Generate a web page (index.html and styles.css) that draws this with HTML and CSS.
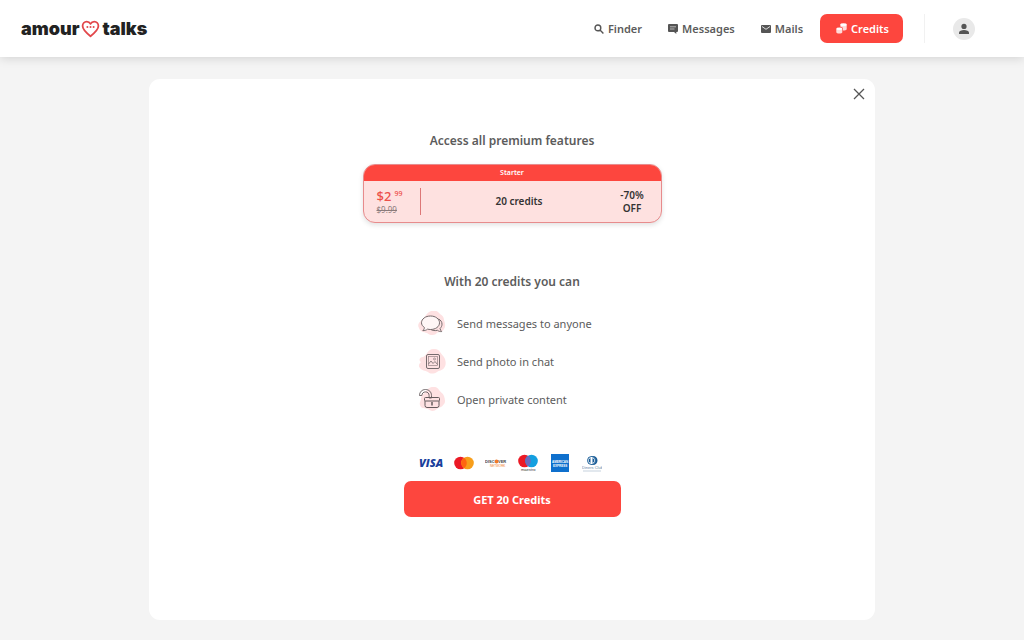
FILE: index.html
```html
<!DOCTYPE html>
<html lang="en">
<head>
  <meta charset="UTF-8">
  <meta name="viewport" content="width=device-width, initial-scale=1.0">
  <title>AmourTalks - Credits</title>
  <link rel="stylesheet" href="styles.css">
</head>
<body>
  <header class="header">
    <a class="logo" href="#">
      <span>amour</span>
      <svg width="19" height="18" viewBox="0 0 19 18" fill="none">
        <path d="M9.5 16.3C4.5 12.3 1.6 9.5 1.6 6.1 1.6 3.4 3.5 1.6 5.7 1.6c1.6 0 3 .8 3.8 2.3.8-1.5 2.2-2.3 3.8-2.3 2.2 0 4.1 1.8 4.1 4.5 0 3.4-2.9 6.2-7.9 10.2z" stroke="#e2474b" stroke-width="1.8" stroke-linejoin="round"/>
        <circle cx="6.4" cy="7" r="1" fill="#e2474b"/>
        <circle cx="9.5" cy="7" r="1" fill="#e2474b"/>
        <circle cx="12.6" cy="7" r="1" fill="#e2474b"/>
      </svg>
      <span>talks</span>
    </a>
    <nav class="nav">
      <a class="nav-link" href="#">
        <svg width="10" height="10" viewBox="0 0 10 10" fill="none" stroke="#555" stroke-width="1.4">
          <circle cx="3.9" cy="3.9" r="2.9"/>
          <path d="M6 6l3.4 3.4"/>
        </svg>
        Finder
      </a>
      <a class="nav-link" href="#">
        <svg width="10" height="10" viewBox="0 0 10 10">
          <path d="M1 0h8q1 0 1 1v6q0 1-1 1H8.3v2L6 8H1Q0 8 0 7V1q0-1 1-1z" fill="#555"/>
          <path d="M2 2.8h6M2 5h4.5" stroke="#fff" stroke-width=".6"/>
        </svg>
        Messages
      </a>
      <a class="nav-link" href="#">
        <svg width="10" height="10" viewBox="0 0 10 10">
          <rect y="1" width="10" height="8" rx="1" fill="#555"/>
          <path d="M1 2.5l4 2.8 4-2.8" fill="none" stroke="#fff" stroke-width=".8"/>
        </svg>
        Mails
      </a>
      <a class="nav-link nav-credits" href="#">
        <svg width="11" height="11" viewBox="0 0 11 11" fill="#fff">
          <path d="M4.400 1.600v2.200c1.400.1 2.500.7 2.500 1.600v2.200c2 0 3.800-.5 3.800-1.300V1.600z" opacity=".8"/>
          <ellipse cx="7.5" cy="1.7" rx="3.2" ry="1.4"/>
          <path d="M.3 5.800v3.400c0 .9 1.400 1.400 3 1.400s3-.5 3-1.400V5.800z" opacity=".8"/>
          <ellipse cx="3.3" cy="5.8" rx="3" ry="1.3"/>
        </svg>
        Credits
      </a>
    </nav>
    <button class="avatar" aria-label="Profile">
      <svg width="12" height="12" viewBox="0 0 12 12" fill="#555">
        <circle cx="6" cy="3.4" r="2.6"/>
        <path d="M1 11V9.6C1 7.9 3.5 7 6 7s5 .9 5 2.6V11z"/>
      </svg>
    </button>
  </header>

  <main class="panel">
    <button class="close" aria-label="Close">
      <svg width="12" height="12" viewBox="0 0 12 12" stroke="#555" stroke-width="1.3">
        <path d="M1 1l10 10M11 1L1 11"/>
      </svg>
    </button>

    <h1 class="title">Access all premium features</h1>

    <section class="plan">
      <div class="plan-name">Starter</div>
      <div class="plan-body">
        <div class="plan-price">
          <div class="price">$2<sup>99</sup></div>
          <del class="old-price">$9.99</del>
        </div>
        <div class="plan-credits">20 credits</div>
        <div class="plan-discount">-70%<br>OFF</div>
      </div>
    </section>

    <h2 class="title subtitle">With 20 credits you can</h2>

    <ul class="features">
      <li>
        <svg width="28" height="26" viewBox="0 0 28 26" fill="none" stroke="#756b6d" stroke-width="1">
          <path d="M11 1c3-2 8-2 10 1 2 2 5 3 5 7 1 3 2 6 0 9-2 4-6 2-8 5-3 2-7 1-9-1-3-1-7-1-8-5-2-3 0-6 3-8 3-3 4-6 7-8z" fill="#fee1e2" stroke="none"/>
          <path d="M20.500 8c2.300 1 3.500 3 3.500 5.200 0 1.700-.7 3.100-1.900 4.200.1 1.300.7 2.300 1.600 3.200-1.800.1-3.100-.4-4.200-1.300-3 .8-6.100.1-7.900-1.800"/>
          <path d="M12.500 5c5 0 9 2.900 9 6.800s-4 6.700-9 6.700c-1 0-2-.1-2.900-.4-1.300 1.100-2.800 1.600-4.800 1.500 1.100-.9 1.500-1.900 1.600-3.100-1.800-1.200-2.900-2.900-2.900-4.700C3.500 7.900 7.500 5 12.500 5z" fill="#fff6f6"/>
        </svg>
        Send messages to anyone
      </li>
      <li>
        <svg width="28" height="26" viewBox="0 0 28 26" fill="none" stroke="#756b6d" stroke-width="1">
          <path d="M12 1c3-2 9-1 10 2 1 2 4 4 5 7s1 7-1 9c-2 3-5 2-7 4-3 2-7 2-9 0-3-2-6-1-8-4-2-2-1-4 1-6-3-2-1-5 2-5 3-1 4-5 7-7z" fill="#fee1e2" stroke="none"/>
          <rect x="8.500" y="5.500" width="13" height="14" rx="1.500"/>
          <rect x="10.500" y="7.500" width="9" height="9" stroke="#958487" stroke-width=".7"/>
          <path d="M10.500 15l2.500-3 2 2.500 2-2 2.500 3" stroke-width=".8"/>
          <circle cx="16.500" cy="10" r="1" stroke-width=".6"/>
        </svg>
        Send photo in chat
      </li>
      <li>
        <svg width="28" height="26" viewBox="0 0 28 26" fill="none" stroke="#655b5d" stroke-width="1">
          <path d="M10 2c3-3 9-3 11 1 1 2 4 3 5 6s2 7-1 9c-1 3-5 2-6 4-3 3-7 2-9 0-3-1-7 0-8-4-1-2 1-4 1-7 1-4 5-6 7-9z" fill="#fee1e2" stroke="none"/>
          <path d="M1.500 8.500C1.500 5 4 2.500 7.500 2.500s6 2.500 6 6V11h-2.400V8.500c0-2.200-1.500-3.600-3.600-3.600S3.900 6.300 3.900 8.500z" stroke-width=".9"/>
          <rect x="6.500" y="10.500" width="15" height="3.500" rx="1"/>
          <path d="M7 14v4.500q0 2 2 2h10q2 0 2-2V14"/>
          <path d="M14 15v3.500" stroke-width="1.500"/>
        </svg>
        Open private content
      </li>
    </ul>

    <div class="cards">
      <svg width="26" height="18" viewBox="0 0 26 18">
        <text x="0" y="13" class="visa">VISA</text>
      </svg>
      <svg width="20" height="18" viewBox="0 0 20 18">
        <circle cx="6.500" cy="9" r="6.300" fill="#eb1925"/>
        <circle cx="13.500" cy="9" r="6.300" fill="#f79e1b"/>
        <path d="M10 3.800a6.300 6.300 0 0 1 0 10.400 6.300 6.300 0 0 1 0-10.400z" fill="#ff6510"/>
      </svg>
      <svg width="22" height="18" viewBox="0 0 22 18">
        <text x="0" y="9" class="discover">DISC</text>
        <circle cx="11.500" cy="7.500" r="1.900" fill="#f17a28"/>
        <text x="13" y="9" class="discover">VER</text>
        <text x="5" y="13" class="network">NETWORK</text>
      </svg>
      <svg width="20" height="18" viewBox="0 0 20 18">
        <circle cx="6.500" cy="7" r="6.300" fill="#eb1925"/>
        <circle cx="13.500" cy="7" r="6.300" fill="#139fe0"/>
        <path d="M10 1.800a6.300 6.300 0 0 1 0 10.400 6.300 6.300 0 0 1 0-10.400z" fill="#6c6bbd"/>
        <text x="3" y="17" class="maestro">maestro</text>
      </svg>
      <svg width="18" height="18" viewBox="0 0 18 18">
        <rect width="18" height="18" fill="#0f70cd"/>
        <text x="1" y="9" class="amex">AMERICAN</text>
        <text x="2" y="13" class="amex">EXPRESS</text>
      </svg>
      <svg width="20" height="18" viewBox="0 0 20 18">
        <path d="M9 2h2a4.500 4.500 0 0 1 0 9H9z" fill="#185c97"/>
        <circle cx="9.500" cy="6.500" r="4" fill="#fff" stroke="#185c97"/>
        <path d="M8.500 4v5a2.600 2.600 0 0 1 0-5zm2 0v5a2.600 2.600 0 0 0 0-5z" fill="#185c97"/>
        <text x="0" y="15" class="diners">Diners Club</text>
        <path d="M1 17h18" stroke="#9fb4c8" stroke-width=".6"/>
      </svg>
    </div>

    <button class="buy">GET 20 Credits</button>
  </main>
</body>
</html>
```

FILE: styles.css
```css
* {
  box-sizing: border-box;
}
body {
  margin: 0;
  min-height: 100vh;
  background: #f4f4f4;
  color: #5c5c5c;
  font-family: "Noto Sans", "Open Sans", sans-serif;
  font-size: 11px;
}
a {
  color: inherit;
  text-decoration: none;
}
button {
  padding: 0;
  border: none;
  font-family: inherit;
  cursor: pointer;
}
svg {
  display: block;
  flex-shrink: 0;
}
.header {
  display: flex;
  align-items: center;
  height: 57px;
  padding: 0 49px 0 21px;
  background: #fff;
  box-shadow: 0 1px 10px rgba(0, 0, 0, 0.15);
}
.logo {
  display: flex;
  align-items: center;
  gap: 2px;
  margin-right: auto;
  color: #222;
  font-family: Inter, sans-serif;
  font-size: 18px;
  font-weight: 900;
}
.nav {
  display: flex;
  align-items: center;
  gap: 26px;
  padding-right: 21px;
  border-right: 1px solid #f1f1f1;
}
.nav-link {
  display: flex;
  align-items: center;
  gap: 4px;
  height: 29px;
  font-size: 11px;
  font-weight: 600;
}
.nav-credits {
  margin-left: -9px;
  padding: 0 14px 0 16px;
  border-radius: 7px;
  background: #fd463e;
  color: #fff;
}
.avatar {
  display: flex;
  align-items: center;
  justify-content: center;
  width: 22px;
  height: 22px;
  margin-left: 28px;
  border-radius: 50%;
  background: #e9e9e9;
}
.panel {
  display: flex;
  flex-direction: column;
  align-items: center;
  width: 90%;
  max-width: 726px;
  min-height: calc(100vh - 99px);
  margin: 22px auto 20px;
  padding: 8px 9px;
  border-radius: 11px;
  background: #fff;
}
.close {
  align-self: flex-end;
  padding: 1px;
  background: none;
}
.title {
  margin: 31px 0 14px;
  font-size: 12px;
  font-weight: 600;
  line-height: 18px;
}
.plan {
  width: 100%;
  max-width: 299px;
  overflow: hidden;
  border: 1px solid #e78b8c;
  border-radius: 12px;
  background: #fee1e0;
  box-shadow: 0 2px 5px rgba(0, 0, 0, 0.12);
}
.plan-name {
  background: #fd463e;
  color: #fff;
  font-size: 7px;
  font-weight: 600;
  line-height: 16px;
  text-align: center;
}
.plan-body {
  display: grid;
  grid-template-columns: 57px 1fr 57px;
  align-items: center;
  height: 41px;
  color: #333;
  font-weight: 600;
  text-align: center;
}
.plan-price {
  padding-left: 13px;
  border-right: 1px solid #dd7777;
  text-align: left;
}
.price {
  color: #ec4f4a;
  font-size: 13px;
  font-weight: 500;
  line-height: 16px;
}
.price sup {
  margin-left: 3px;
  font-size: 7px;
  line-height: 1;
}
.old-price {
  display: block;
  color: #8b7b7b;
  font-size: 8px;
  font-weight: 400;
  line-height: 11px;
}
.plan-credits,
.plan-discount {
  font-size: 10px;
  line-height: 13px;
}
.plan-credits {
  padding-left: 14px;
}
.subtitle {
  margin-top: 50px;
}
.features {
  display: flex;
  flex-direction: column;
  gap: 12px;
  width: 188px;
  margin: 6px 0 41px;
  padding: 0;
  list-style: none;
}
.features li {
  display: flex;
  align-items: center;
  gap: 11px;
  line-height: 26px;
  white-space: nowrap;
}
.cards {
  display: grid;
  grid-template-columns: repeat(6, 32px);
  align-items: center;
  justify-items: center;
}
.cards text {
  font-family: "Liberation Sans", Arial, sans-serif;
}
.cards .visa {
  fill: #1a3f9c;
  font-family: "Open Sans", sans-serif;
  font-size: 11px;
  font-style: italic;
  font-weight: 800;
}
.cards .discover {
  fill: #444;
  font-size: 4px;
  font-weight: 700;
}
.cards .network {
  fill: #f17a28;
  font-size: 3px;
}
.cards .maestro {
  fill: #333;
  font-size: 4px;
}
.cards .amex {
  fill: #fff;
  font-size: 3px;
  font-weight: 700;
}
.cards .diners {
  fill: #6686a5;
  font-size: 4px;
}
.buy {
  width: 100%;
  max-width: 217px;
  height: 36px;
  margin-top: 9px;
  border-radius: 7px;
  background: #fd463e;
  color: #fff;
  font-size: 11px;
  font-weight: 700;
}
```
